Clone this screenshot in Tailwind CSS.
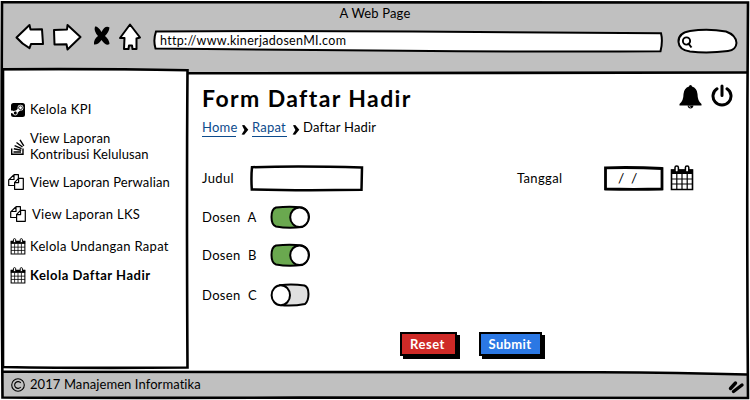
<!DOCTYPE html>
<html lang="id">
<head>
<meta charset="utf-8">
<title>A Web Page</title>
<script src="https://cdn.jsdelivr.net/npm/@tailwindcss/browser@4"></script>
</head>
<body class="w-[750px] h-[400px] overflow-hidden bg-white text-black font-[Lato,sans-serif] text-[13px] leading-4 tracking-[0.35px]">
<svg class="hidden">
  <symbol id="cal" viewBox="0 0 24 26"><path d="M1.5 5H22.5V24.5H1.5Z" fill="#fff" stroke="#000" stroke-width="1.6"/><path d="M1 4.5H23V9H1Z"/><path d="M1.5 14H22.5M1.5 19H22.5M6.8 9V24M12 9V24M17.2 9V24" stroke="#000" stroke-width="1.2" fill="none"/><rect x="5" y="1" width="3.4" height="6" rx="1.6" fill="#fff" stroke="#000" stroke-width="1.5"/><rect x="15.4" y="1" width="3.4" height="6" rx="1.6" fill="#fff" stroke="#000" stroke-width="1.5"/></symbol>
  <symbol id="copy" viewBox="0 0 16 16"><path d="M6 .7H10.4V5M6 .7L.7 6V11.5H6M6 .7V5.5H.7M10.6 4.3H15.3V15.3H6.6V8.3L10.6 4.3V8.6H6.6" fill="none" stroke="#000" stroke-width="1.2" stroke-linejoin="round"/></symbol>
  <symbol id="chev" viewBox="0 0 8 10"><path d="M1 .3L3.3 0L7.3 4.8L3.2 9.800L.6 9.600L3.400 4.900Z"/></symbol>
</svg>
<div class="relative flex flex-col w-[750px] h-[400px]">
  <header class="relative h-[71px] shrink-0 bg-[#c0c0c0]">
    <div class="h-7 pt-[5px] text-center tracking-[0.15px]">A Web Page</div>
    <div class="flex items-start pl-[15px]">
      <svg class="w-[118px] h-7 -mt-[6px] mr-[20px] shrink-0 overflow-visible" viewBox="15 22 118 28" fill="#fff" stroke="#000" stroke-width="2" stroke-linejoin="round">
        <path d="M16.5 37.5L29.5 25L30.5 29.5L42 29.3L43 44L31 44L29.5 48.2Q22 44 16.5 37.5Z"/>
        <path d="M54 30L67 29.5L67.5 25L80.500 37L67.500 49.500L66.500 44.300L54.500 44.500Z"/>
        <path d="M95 26.500Q98 26 101.500 32Q105 25 109.500 27.500Q109 32 105 36Q109 39 109.500 44Q106 46.500 101.500 40Q98 45 94 44.500Q93.500 39 98 36Q93.500 31 95 26.500Z" fill="#000" stroke="none"/>
        <path d="M130 24.500L140 37.500L136.500 38.500L136.500 49L132.500 49L132 45.500L129 45.500L128.500 49L124 49L124.500 38L120 38Z"/>
      </svg>
      <div class="relative w-[510px] h-5 mt-[3px] pt-[2px] pl-[7px] text-[12.500px] tracking-[0.3px]">
        <svg class="absolute inset-0 w-[510px] h-5 overflow-visible" viewBox="0 0 510 20" fill="#fff" stroke="#000" stroke-width="2"><path d="M3 0.500Q120 -.5 260 .6T508 2.200Q510 10 507.500 20.300Q400 21 250 19.800T2.500 17.500Q0 9 3 .5Z"/></svg>
        <span class="relative">http://www.kinerjadosenMI.com</span>
      </div>
      <svg class="w-[60px] h-[26px] ml-[14px] overflow-visible" viewBox="677 28 60 26" fill="#fff" stroke="#000" stroke-width="2"><path d="M678.500 42Q678 33 690 31Q708 28.500 726 31.500Q736 35 736.500 43Q736 50 728 51Q708 53.500 690 51.500Q679 50 678.500 42Z"/><circle cx="686.500" cy="41" r="3.600" stroke-width="1.900"/><path d="M688 43L691.500 47.500" stroke-width="2"/></svg>
    </div>
  </header>
  <main class="flex h-[301px] shrink-0">
    <nav class="w-[188px] shrink-0 pt-[28px]">
      <div class="flex items-center h-5 pl-[11px] gap-[5px]">
        <svg class="w-[14px] h-[14px] mt-[2px]" viewBox="0 0 14 14"><rect width="14" height="14" rx="2.500"/><path d="M0 8.500L4.500 10L9.500 5" stroke="#fff" stroke-width="2.800" fill="none"/><circle cx="9.500" cy="4.700" r="2.900" fill="#fff"/><circle cx="9.500" cy="4.700" r="1.900" fill="#fff" stroke="#000" stroke-width=".8"/><circle cx="4.300" cy="10" r="2" stroke="#fff" stroke-width=".9"/></svg>
        <span>Kelola KPI</span></div>
      <div class="flex items-center h-8 mt-[11px] pl-[11px] gap-[5px]">
        <svg class="w-[14px] h-4 mt-[2px]" viewBox="0 0 14 16" fill="none" stroke="#000" stroke-width="1.400"><path d="M.7 9.500V15.300H12V9.500M2.500 13H10M2.800 9.800L10.200 11.300M3.600 6.600L10.600 9.600M5.500 3.500L11.500 8M9 .8L12.800 6.800"/></svg>
        <span class="tracking-[0.1px]"><span class="tracking-[0.2px]">View Laporan</span><br>Kontribusi Kelulusan</span></div>
      <div class="flex items-center h-5 mt-[10px] pl-2 gap-[6px] tracking-[0.13px]"><svg class="w-4 h-4"><use href="#copy"/></svg><span>View Laporan Perwalian</span></div>
      <div class="flex items-center h-5 mt-3 pl-[10px] gap-[6px] tracking-[0.27px]"><svg class="w-4 h-4"><use href="#copy"/></svg><span>View Laporan LKS</span></div>
      <div class="flex items-center h-5 mt-3 pl-[10px] gap-1 tracking-[0.3px]"><svg class="w-4 h-[17px] mt-[1px]"><use href="#cal"/></svg><span>Kelola Undangan Rapat</span></div>
      <div class="flex items-center h-5 mt-[9px] pl-[10px] gap-1"><svg class="w-4 h-[17px] mt-[1px]"><use href="#cal"/></svg><span class="font-bold tracking-[0.5px]">Kelola Daftar Hadir</span></div>
    </nav>
    <section class="flex-1 pl-[14px] pt-[13px]">
      <div class="flex h-7">
        <h1 class="w-[476px] text-[23px] leading-7 font-bold tracking-[1.400px]">Form Daftar Hadir</h1>
        <svg class="w-[23px] h-6 ml-[1px] mt-[1px]" viewBox="0 0 23 24"><path d="M11.500 0Q13 0 13 1.500Q18 3 18.500 9Q18.500 16 22.500 19V20.500H.5V19Q4.500 16 4.500 9Q5 3 10 1.500Q10 0 11.500 0Z"/><path d="M8.500 20.500Q9 23.500 11.500 23.500T14.500 20.500Z"/><path d="M10 21Q10.500 22.300 12 22.300" stroke="#fff" fill="none" stroke-width=".7"/></svg>
        <svg class="w-[22px] h-6 ml-[9px]" viewBox="0 0 22 24" fill="none" stroke="#000" stroke-width="3"><path d="M6 4.800A9 8.800 0 1 0 16 4.800M11 2V11.500" stroke-linecap="round"/></svg>
      </div>
      <div class="flex items-center h-5 mt-[6px] tracking-[0.2px]">
        <a class="w-[34px] h-[18px] border-b border-[#0d4b8c] text-[#0d4b8c] whitespace-nowrap">Home</a>
        <svg class="w-[8px] h-[10px] ml-[5px] mr-[3px] mt-[3px]"><use href="#chev"/></svg>
        <a class="w-[35px] h-[18px] border-b border-[#0d4b8c] text-[#0d4b8c] whitespace-nowrap">Rapat</a>
        <svg class="w-[8px] h-[10px] ml-[5px] mr-[3px] mt-[3px]"><use href="#chev"/></svg>
        <span class="-mt-[2px]">Daftar Hadir</span>
      </div>
      <div class="flex items-center h-7 mt-[26px]">
        <label class="w-12 -mt-px">Judul</label>
        <svg class="w-[114px] h-[27px]" viewBox="0 0 114 27"><path d="M2 2.200Q50 .8 112 2.500L111.500 24.800Q50 25.800 1.800 24.500Q1 12 2 2.200Z" fill="#fff" stroke="#000" stroke-width="2.500"/></svg>
        <label class="ml-[153px] w-[87px] -mt-px">Tanggal</label>
        <div class="relative w-[60px] h-[25px]">
          <svg class="absolute inset-0 w-[60px] h-[25px]" viewBox="0 0 60 25"><path d="M1.500 1.800Q30 1 58 2.500L58 23Q30 23.800 1.500 23Z" fill="#fff" stroke="#000" stroke-width="2.800"/></svg>
          <span class="relative block pt-1 pl-[14px] text-[14px] whitespace-pre tracking-[1.500px]">/ /</span>
        </div>
        <svg class="w-6 h-[26px] ml-[6px]"><use href="#cal"/></svg>
      </div>
      <div class="flex items-center h-6 mt-[13px]"><label class="w-[68px] whitespace-pre">Dosen  A</label>
        <svg class="w-10 h-6" viewBox="0 0 40 24" stroke="#000" stroke-width="2"><path d="M6 2.500Q20 .8 32 2.500Q39 5 39 12Q38 20 32 22Q18 23.800 6 21.500Q1.500 20 1.500 12T6 2.500Z" fill="#6aa84f"/><ellipse cx="29.500" cy="12.200" rx="9.300" ry="9.800" fill="#fff"/></svg></div>
      <div class="flex items-center h-6 mt-[14px]"><label class="w-[68px] whitespace-pre">Dosen  B</label>
        <svg class="w-10 h-6" viewBox="0 0 40 24" stroke="#000" stroke-width="2"><path d="M6 2.500Q20 .8 32 2.500Q39 5 39 12Q38 20 32 22Q18 23.800 6 21.500Q1.500 20 1.500 12T6 2.500Z" fill="#6aa84f"/><ellipse cx="29.500" cy="12.200" rx="9.300" ry="9.800" fill="#fff"/></svg></div>
      <div class="flex items-center h-6 mt-4"><label class="w-[68px] whitespace-pre">Dosen  C</label>
        <svg class="w-10 h-6" viewBox="0 0 40 24" stroke="#000" stroke-width="2"><path d="M10 2.200Q22 .8 34.500 2.500Q38.500 4 38.500 11T35 21Q22 23.500 10 22Z" fill="#e0e0e0"/><ellipse cx="10.800" cy="12.200" rx="9.200" ry="10" fill="#fff"/></svg></div>
      <div class="flex mt-[25px] ml-[198px] gap-[19px] text-white font-bold">
        <button class="w-[57px] h-[24px] box-border border-2 border-black bg-[#cf2a27] shadow-[3px_3px_0_#000] leading-5 -indent-[2px] tracking-[0.5px]">Reset</button>
        <button class="w-[63px] h-[24px] ml-[3px] box-border border-2 border-black bg-[#2b78e4] shadow-[3px_3px_0_#000] leading-5 -indent-[1px]">Submit</button>
      </div>
    </section>
  </main>
  <footer class="flex items-start h-[26px] shrink-0 bg-[#c0c0c0] pl-[11px] pt-[5px] relative">
    <svg class="w-[14px] h-[14px] mt-[1px] mr-[5px]" viewBox="0 0 14 14" fill="none" stroke="#000" stroke-width="1.100"><circle cx="7" cy="7" r="6.300"/><path d="M9.800 5A3.400 3.400 0 1 0 9.800 9"/></svg>
    <span class="tracking-[0.080px] -mt-px">2017 Manajemen Informatika</span>
    <svg class="w-4 h-[14px] ml-auto mr-[6px] mt-[3px] shrink-0 overflow-visible" viewBox="728 380 16 14" stroke="#000" stroke-width="3.400" stroke-linecap="round"><path d="M730.500 388.500L735.500 383M733.500 391.500L742 385"/></svg>
  </footer>
  <svg class="absolute inset-0 w-[750px] h-[400px] pointer-events-none" viewBox="0 0 750 400" fill="none" stroke="#000" stroke-width="2.600">
    <path d="M0 0H750V400H0ZM3 2.500V397H747V2.500Z" fill="#fff" stroke="none" fill-rule="evenodd"/>
    <path d="M2.800 69.500L187.500 70.300V73L747 72V60H3Z" fill="#c0c0c0" stroke="none"/>
    <path d="M3 370.500L747 371.500V374L600 372L3 372Z" fill="#fff" stroke="none"/>
    <path d="M2 2.200Q300 1 748 2.500Q746.500 200 748 398Q500 397 300 397.600T2.500 397.500Q1 200 2 2.200Z"/>
    <path d="M188 73.300Q450 72 747 72.500"/>
    <path d="M3 69.200Q100 68.500 187.500 70.200Q186.500 200 187.500 367.500Q90 368.500 3 367Z"/>
    <path d="M3 371.800Q300 371.500 600 372.200Q680 372.600 747 374.500"/>
  </svg>
</div>
</body>
</html>
